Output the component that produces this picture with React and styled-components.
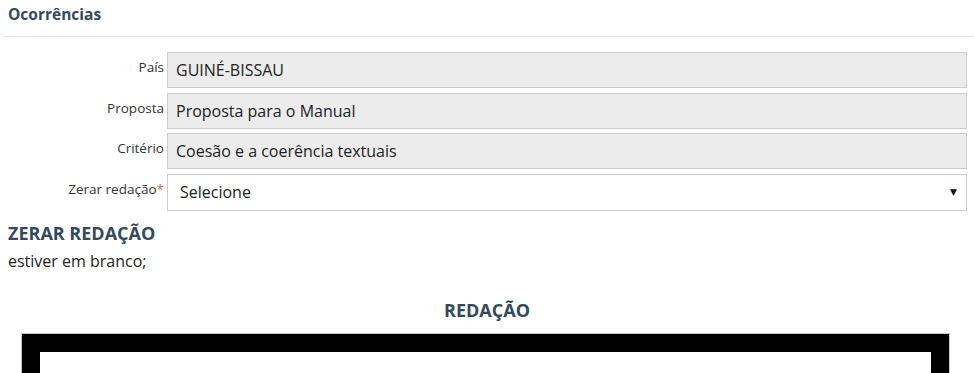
import styled, { createGlobalStyle } from "styled-components";

const GlobalStyle = createGlobalStyle`
  body {
    margin: 0;
    background: #fff;
    font-family: "Open Sans", "Liberation Sans", sans-serif;
    color: #222;
    overflow: hidden;
  }
`;

const Page = styled.div`
  width: 974px;
  height: 373px;
  overflow: hidden;
`;

const Header = styled.div`
  margin-left: 3px;
  height: 37px;
  border-bottom: 1px solid #e5e5e5;
  display: flex;
  align-items: center;
  padding-left: 5px;
  padding-bottom: 9px;
  box-sizing: border-box;
`;

const Title = styled.h3`
  margin: 0;
  font-size: 15.5px;
  font-weight: 700;
  color: #34495e;
`;

const Form = styled.div`
  display: flex;
  flex-direction: column;
  gap: 4.5px;
  padding: 15px 7px 0 0;
`;

const Row = styled.div`
  display: grid;
  grid-template-columns: 167px 1fr;
  align-items: center;
`;

const Label = styled.label`
  text-align: right;
  padding-right: 3px;
  font-size: 13.5px;
  color: #333;
  position: relative;
  top: -3px;
`;

const Required = styled.span`
  color: #e9603a;
`;

const Field = styled.div`
  height: ${({ $readonly }) => ($readonly ? "36px" : "37px")};
  box-sizing: border-box;
  border: 1px solid #cccccc;
  background: ${({ $readonly }) => ($readonly ? "#ececec" : "#fff")};
  display: flex;
  align-items: center;
  justify-content: space-between;
  padding: 0 9px 0 ${({ $readonly }) => ($readonly ? "8px" : "12px")};
  font-size: 16px;
  color: #222;
`;

const Arrow = styled.span`
  font-size: 9px;
  color: #111;
  font-family: "DejaVu Sans", sans-serif;
`;

const Section = styled.div`
  padding: 10px 8px 0;
`;

const SectionTitle = styled.h4`
  margin: 0;
  font-size: 18px;
  font-weight: 700;
  color: #34495e;
  line-height: 24px;
`;

const Text = styled.p`
  margin: 3px 0 0;
  font-size: 16px;
  line-height: 26px;
  color: #222;
`;

const Center = styled.h4`
  margin: 24px 0 0;
  text-align: center;
  font-size: 18px;
  font-weight: 700;
  color: #34495e;
  line-height: 24px;
`;

const Frame = styled.div`
  margin: 12px 0 0 22px;
  width: 927px;
  height: 120px;
  box-sizing: border-box;
  border: 18px solid #000;
  outline: 1px solid #c8c8c8;
  background: #fff;
`;

const fields = [
  { label: "País", value: "GUINÉ-BISSAU" },
  { label: "Proposta", value: "Proposta para o Manual" },
  { label: "Critério", value: "Coesão e a coerência textuais" },
];

export default function App() {
  return (
    <Page>
      <GlobalStyle />
      <Header>
        <Title>Ocorrências</Title>
      </Header>
      <Form>
        {fields.map((f) => (
          <Row key={f.label}>
            <Label>{f.label}</Label>
            <Field $readonly>{f.value}</Field>
          </Row>
        ))}
        <Row>
          <Label>
            Zerar redação<Required>*</Required>
          </Label>
          <Field>
            <span>Selecione</span>
            <Arrow>▼</Arrow>
          </Field>
        </Row>
      </Form>
      <Section>
        <SectionTitle>ZERAR REDAÇÃO</SectionTitle>
        <Text>estiver em branco;</Text>
      </Section>
      <Center>REDAÇÃO</Center>
      <Frame />
    </Page>
  );
}
